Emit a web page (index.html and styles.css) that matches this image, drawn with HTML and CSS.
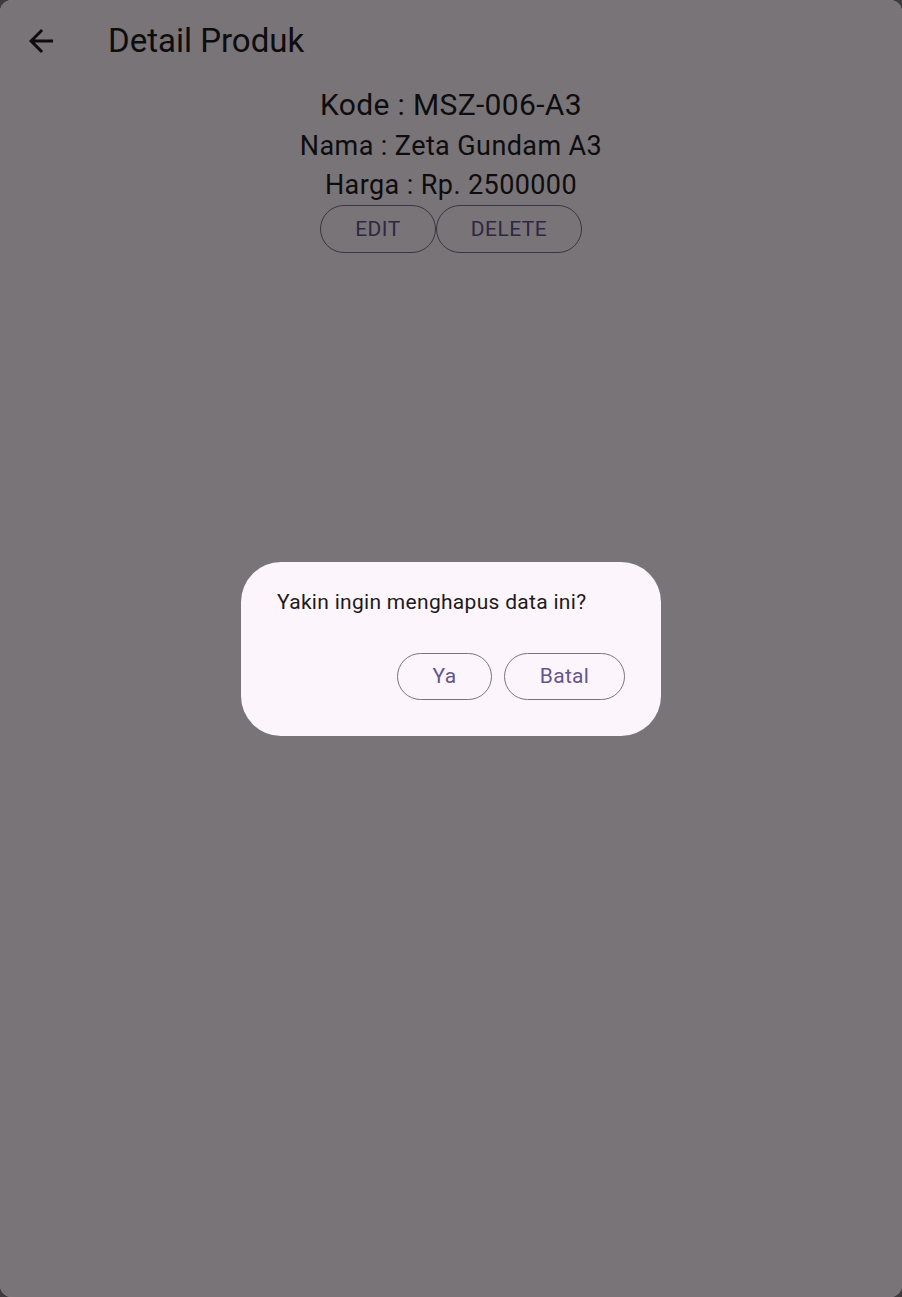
FILE: index.html
```html
<!DOCTYPE html>
<html lang="id">
<head>
<meta charset="utf-8">
<title>Detail Produk</title>
<link rel="stylesheet" href="styles.css">
</head>
<body>
<div class="window">
  <header class="appbar">
    <button class="back" aria-label="Kembali">
      <svg viewBox="0 0 24 24" width="36" height="36"><path d="M20 11H7.83l5.59-5.59L12 4l-8 8 8 8 1.41-1.41L7.83 13H20v-2z" fill="currentColor"/></svg>
    </button>
    <h1 class="title">Detail Produk</h1>
  </header>
  <main class="content">
    <p class="line kode">Kode : MSZ-006-A3</p>
    <p class="line nama">Nama : Zeta Gundam A3</p>
    <p class="line harga">Harga : Rp. 2500000</p>
    <div class="actions">
      <button class="outlined wide">EDIT</button>
      <button class="outlined wide2">DELETE</button>
    </div>
  </main>
  <div class="scrim">
    <div class="dialog" role="dialog">
      <p class="dialog-text">Yakin ingin menghapus data ini?</p>
      <div class="dialog-actions">
        <button class="dbtn ya">Ya</button>
        <button class="dbtn batal">Batal</button>
      </div>
    </div>
  </div>
</div>
</body>
</html>
```

FILE: styles.css
```css
html, body {
  margin: 0;
  padding: 0;
  background: #3e3b3e;
  height: 100%;
}
body {
  font-family: Roboto, "Noto Sans", sans-serif;
}
.window {
  position: relative;
  width: 902px;
  height: 1297px;
  background: #fef7ff;
  border-radius: 12px;
  overflow: hidden;
}
.appbar {
  height: 81px;
  display: flex;
  align-items: center;
  padding-left: 23px;
}
.back {
  width: 36px;
  height: 36px;
  padding: 0;
  border: 0;
  background: none;
  color: #1d1b20;
  display: flex;
}
.title {
  margin: 0 0 0 49px;
  font-size: 33px;
  font-weight: 400;
  color: #1d1b20;
}
.content {
  display: flex;
  flex-direction: column;
  align-items: center;
  padding-top: 6px;
}
.line {
  margin: 0;
  color: #1d1b20;
}
.kode {
  font-size: 30px;
  line-height: 35px;
  letter-spacing: 0.35px;
}
.nama {
  font-size: 27px;
  line-height: 32px;
  letter-spacing: 0.4px;
  margin-top: 8px;
}
.harga {
  font-size: 27px;
  line-height: 32px;
  letter-spacing: 0.4px;
  margin-top: 7px;
}
.actions {
  display: flex;
  margin-top: 4px;
}
.outlined {
  height: 48px;
  border: 1.5px solid #79747e;
  border-radius: 24px;
  background: transparent;
  color: #65558f;
  font-family: Roboto, sans-serif;
  font-size: 21px;
  letter-spacing: 0.5px;
  padding: 0;
}
.wide { width: 116px; }
.wide2 { width: 146px; }
.scrim {
  position: absolute;
  inset: 0;
  background: rgba(0, 0, 0, 0.53);
  display: flex;
  align-items: center;
  justify-content: center;
}
.dialog {
  width: 348px;
  background: #fcf5fc;
  border-radius: 40px;
  padding: 25px 36px 36px 36px;
}
.dialog-text {
  margin: 0;
  font-size: 21px;
  line-height: 31px;
  color: #1d1b20;
  letter-spacing: 0.3px;
}
.dialog-actions {
  display: flex;
  justify-content: flex-end;
  gap: 12px;
  margin-top: 35px;
}
.dbtn {
  height: 47px;
  border: 1.5px solid #79747e;
  border-radius: 24px;
  background: transparent;
  color: #65558f;
  font-family: Roboto, sans-serif;
  font-size: 21px;
  letter-spacing: 0.3px;
  padding: 0;
}
.ya { width: 95px; }
.batal { width: 121px; }
```
